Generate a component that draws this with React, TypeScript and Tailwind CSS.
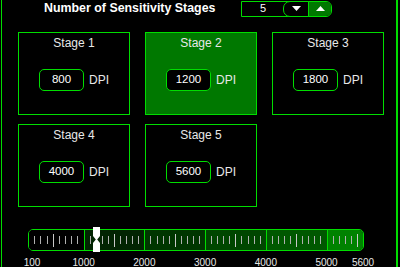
import React from "react";

const green = "#00dd00";

interface Stage {
  label: string;
  dpi: number;
  active?: boolean;
}

const stages: Stage[] = [
  { label: "Stage 1", dpi: 800 },
  { label: "Stage 2", dpi: 1200, active: true },
  { label: "Stage 3", dpi: 1800 },
  { label: "Stage 4", dpi: 4000 },
  { label: "Stage 5", dpi: 5600 },
];

// slider segments: from, to, fill
const segments = [
  { from: 100, to: 1000, fill: "bg-black" },
  { from: 1000, to: 2000, fill: "bg-[#022402]" },
  { from: 2000, to: 3000, fill: "bg-[#003600]" },
  { from: 3000, to: 4000, fill: "bg-[#004600]" },
  { from: 4000, to: 5000, fill: "bg-[#005800]" },
  { from: 5000, to: 5600, fill: "bg-[#008200]" },
];

const labels = [100, 1000, 2000, 3000, 4000, 5000, 5600];

// px position of a dpi value inside the slider track (334px wide)
const pos = (v: number) => 1 + ((v - 100) / 5500) * 334;

function StageCard({ stage }: { stage: Stage }) {
  return (
    <div
      className={
        "h-[83px] border border-[#00dd00] flex flex-col items-center pt-[3px] " +
        (stage.active ? "bg-[#007800]" : "bg-black")
      }
    >
      <span className="text-[12px] leading-[14px] text-[#e8e8e8]">{stage.label}</span>
      <div className="mt-[19px] flex items-center gap-[5px]">
        <div className="w-[45px] h-[22px] rounded-[5px] border border-[#00dd00] bg-black flex items-center justify-center text-[11.5px] text-white">
          {stage.dpi}
        </div>
        <span className="text-[12px] text-[#e8e8e8]">DPI</span>
      </div>
    </div>
  );
}

function Slider() {
  return (
    <div className="ml-[26px] mt-[22px] w-[336px]">
      <div className="relative">
        <div className="h-[22px] rounded-[5px] border border-[#00dd00] overflow-hidden grid grid-cols-[9fr_10fr_10fr_10fr_10fr_6fr]">
          {segments.map((s, i) => {
            const ticks: number[] = [];
            for (let v = s.from + 100; v < s.to; v += 100) ticks.push(v);
            return (
              <div
                key={s.from}
                className={
                  "flex items-center justify-evenly " +
                  s.fill +
                  (i > 0 ? " border-l border-[#00dd00]" : "")
                }
              >
                {ticks.map((v) => (
                  <div
                    key={v}
                    className={
                      v % 500 === 0
                        ? "w-px h-[13px] bg-[#c8c8c8]"
                        : "w-px h-[8px] bg-[#b0b0b0]"
                    }
                  />
                ))}
              </div>
            );
          })}
        </div>
        <svg
          className="absolute top-[-2px]"
          style={{ left: pos(1200) - 3 }}
          width="7"
          height="25"
          viewBox="0 0 7 25"
        >
          <path d="M0 0H7V9L4.2 12.5L7 16V25H0V16L2.8 12.5L0 9Z" fill="#ffffff" />
        </svg>
      </div>
      <div className="relative h-[16px] text-[10px] text-[#e8e8e8] font-['Liberation_Sans',Arial,sans-serif]">
        {labels.map((v) => (
          <span
            key={v}
            className="absolute top-[6px] leading-[11px] -translate-x-1/2"
            style={{ left: v === 100 ? 4 : pos(v) }}
          >
            {v}
          </span>
        ))}
      </div>
    </div>
  );
}

export default function App() {
  return (
    <div className="w-[400px] h-[267px] bg-black overflow-hidden font-['Liberation_Sans',Arial,sans-serif]">
      <div className="ml-[1px] w-[397px] h-full border-l border-r-2 border-[#00dd00] flex flex-col">
        <div className="h-[18px] flex items-center">
          <span className="ml-[42px] text-[12.4px] font-bold text-white leading-none -mt-[2px]">
            Number of Sensitivity Stages
          </span>
          <div className="ml-[26px] mt-[-1px] w-[91px] h-[16px] flex border border-[#00dd00] rounded-r-[6px]">
            <div className="w-[41px] flex items-center justify-center text-[11px] text-white leading-none">
              5
            </div>
            <div className="w-[26px] -my-px h-[16px] border border-[#00dd00] rounded-l-[7px] bg-black flex items-center justify-center">
              <svg width="9" height="5" viewBox="0 0 9 5">
                <path d="M0 0H9L4.5 5Z" fill="#ffffff" />
              </svg>
            </div>
            <div className="flex-1 bg-[#007800] rounded-r-[5px] flex items-center justify-center">
              <svg width="9" height="5" viewBox="0 0 9 5">
                <path d="M0 5H9L4.5 0Z" fill="#ffffff" />
              </svg>
            </div>
          </div>
        </div>
        <div className="ml-[16px] mt-[14px] grid grid-cols-[112px_112px_112px] gap-x-[15px] gap-y-[9px]">
          {stages.map((s) => (
            <StageCard key={s.label} stage={s} />
          ))}
        </div>
        <Slider />
      </div>
    </div>
  );
}
